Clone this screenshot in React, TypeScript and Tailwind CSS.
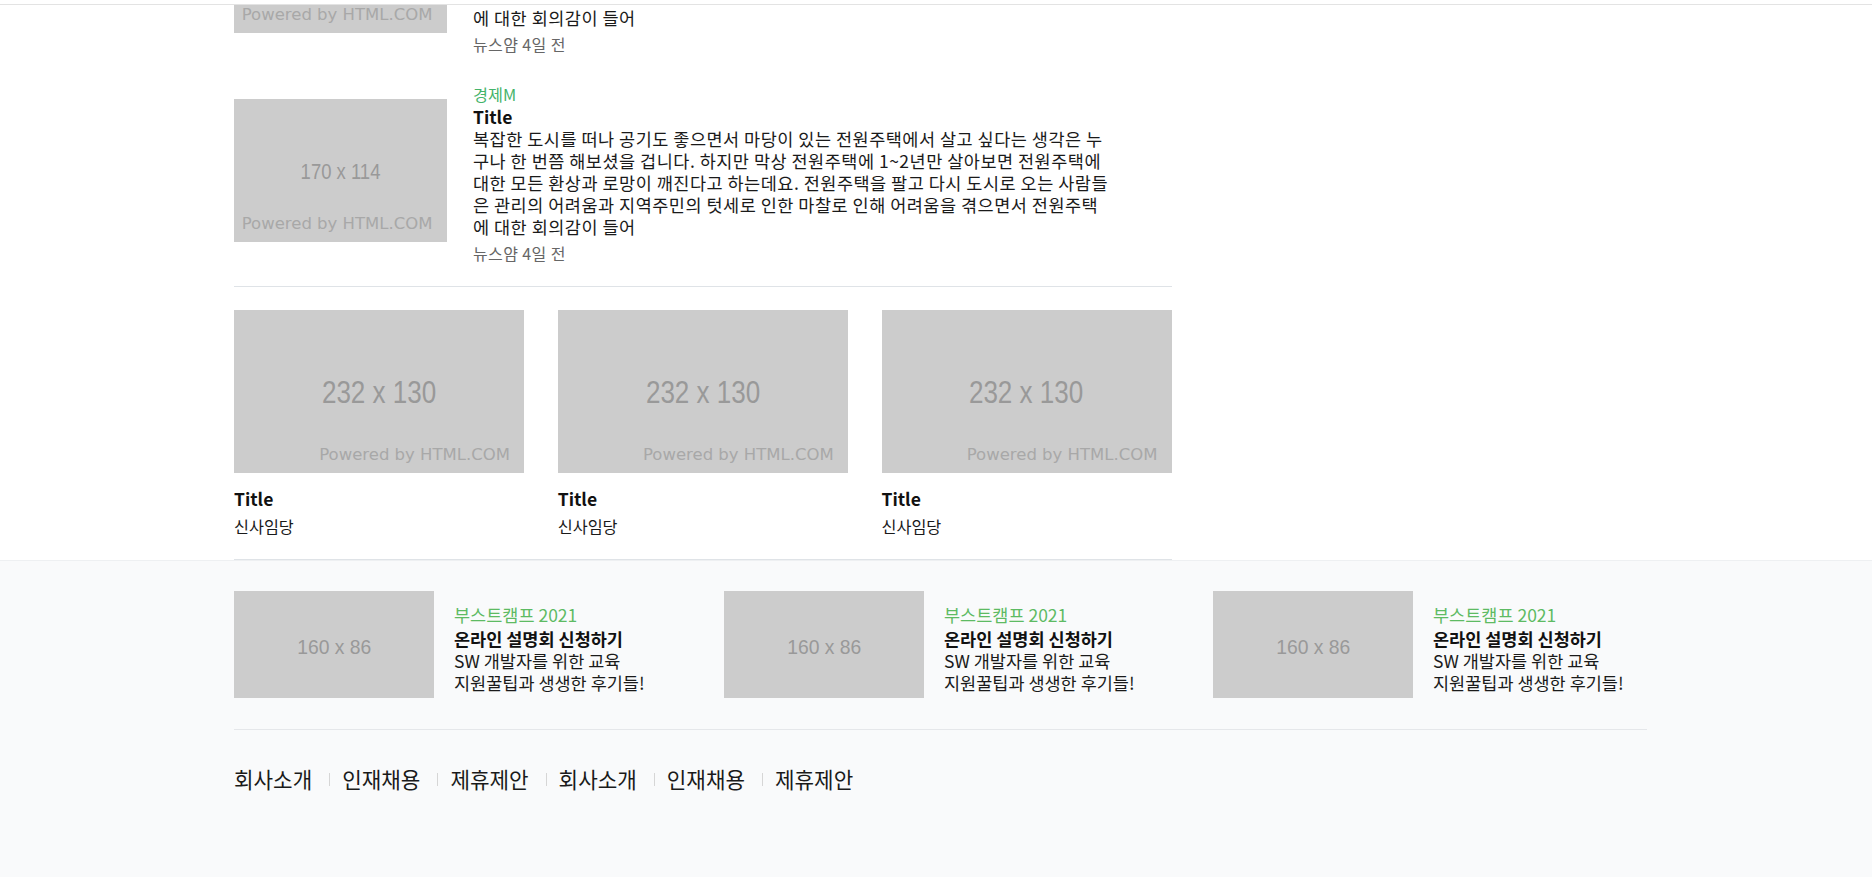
import React from "react";

const bodyLines = [
  "복잡한 도시를 떠나 공기도 좋으면서 마당이 있는 전원주택에서 살고 싶다는 생각은 누",
  "구나 한 번쯤 해보셨을 겁니다. 하지만 막상 전원주택에 1~2년만 살아보면 전원주택에",
  "대한 모든 환상과 로망이 깨진다고 하는데요. 전원주택을 팔고 다시 도시로 오는 사람들",
  "은 관리의 어려움과 지역주민의 텃세로 인한 마찰로 인해 어려움을 겪으면서 전원주택",
  "에 대한 회의감이 들어",
];

function NewsItem() {
  return (
    <div className="flex items-start">
      <div className="relative mt-[16px] flex h-[142.5px] w-[212.5px] shrink-0 items-center justify-center bg-[#cccccc] pt-[4px]">
        <span className="[font-family:'Liberation_Sans',Arial,sans-serif] text-[22px] leading-[24px] text-[#999999] scale-x-[0.84]">
          170 x 114
        </span>
        <span className="absolute bottom-[8px] right-[14px] whitespace-nowrap [font-family:'DejaVu_Sans',sans-serif] text-[16.5px] leading-[20px] text-[#a8a8a8]">
          Powered by HTML.COM
        </span>
      </div>
      <div className="ml-[26.5px] flex flex-col">
        <div className="text-[16.25px] leading-[22px] text-[#44b36a]">경제M</div>
        <div className="mt-px text-[17.5px] font-bold leading-[22px] text-[#111111]">Title</div>
        {bodyLines.map((l, i) => (
          <div key={i} className="whitespace-nowrap text-[17.5px] leading-[22px] tracking-[0.5px] text-[#1a1a1a]">
            {l}
          </div>
        ))}
        <div className="mt-[4px] text-[16px] leading-[22px] tracking-[0.4px] text-[#666666]">뉴스얌 4일 전</div>
      </div>
    </div>
  );
}

function Card() {
  return (
    <div className="flex flex-col">
      <div className="relative flex h-[162.5px] w-full items-center justify-center bg-[#cccccc] pt-[4px]">
        <span className="[font-family:'Liberation_Sans',Arial,sans-serif] text-[31px] leading-[34px] text-[#999999] scale-x-[0.84]">
          232 x 130
        </span>
        <span className="absolute bottom-[8px] right-[14px] whitespace-nowrap [font-family:'DejaVu_Sans',sans-serif] text-[16.5px] leading-[20px] text-[#a8a8a8]">
          Powered by HTML.COM
        </span>
      </div>
      <div className="mt-[15.5px] text-[17.5px] font-bold leading-[22px] text-[#111111]">Title</div>
      <div className="mt-[4.7px] text-[16.25px] leading-[22px] text-[#1a1a1a]">신사임당</div>
    </div>
  );
}

function Promo() {
  return (
    <div className="flex items-start">
      <div className="flex h-[107.5px] w-[200px] shrink-0 items-center justify-center bg-[#cccccc] pt-[4px]">
        <span className="[font-family:'Liberation_Sans',Arial,sans-serif] text-[21px] leading-[24px] text-[#999999] scale-x-[0.92]">
          160 x 86
        </span>
      </div>
      <div className="ml-[20px] mt-[13px] flex flex-col whitespace-nowrap">
        <div className="text-[17.5px] leading-[22px] text-[#5dbb63]">부스트캠프 2021</div>
        <div className="mt-[2.5px] text-[17.5px] font-bold leading-[22px] text-[#111111]">온라인 설명회 신청하기</div>
        <div className="text-[17.5px] leading-[22px] text-[#1a1a1a]">SW 개발자를 위한 교육</div>
        <div className="text-[17.5px] leading-[22px] text-[#1a1a1a]">지원꿀팁과 생생한 후기들!</div>
      </div>
    </div>
  );
}

const links = ["회사소개", "인재채용", "제휴제안", "회사소개", "인재채용", "제휴제안"];

export default function App() {
  return (
    <div className="flex min-h-[877px] flex-col overflow-hidden bg-white [font-family:'Noto_Sans_CJK_KR','Noto_Sans',sans-serif]">
      <div className="relative z-10 h-[5px] w-full shrink-0 border-b border-[#e3e3e3] bg-white" />
      <main className="-mt-[131px] ml-[234px] w-[937.5px]">
        <section className="flex flex-col gap-[28px] border-b border-[#dfe3e7] pb-[22px]">
          <NewsItem />
          <NewsItem />
        </section>
        <section className="grid grid-cols-3 gap-x-[33.75px] border-b border-[#dfe3e7] pb-[22.3px] pt-[23px]">
          <Card />
          <Card />
          <Card />
        </section>
      </main>
      <footer className="flex-1 border-t border-[#eef0f2] bg-[#f9fafb]">
        <div className="ml-[234px] w-[1413px]">
          <div className="grid grid-cols-[490px_489px_1fr] border-b border-[#e5e7ea] pb-[30.5px] pt-[30px]">
            <Promo />
            <Promo />
            <Promo />
          </div>
          <div className="flex items-center pt-[36px]">
            {links.map((l, i) => (
              <React.Fragment key={i}>
                <span className="text-[21.25px] leading-[26px] text-[#1a1a1a]">{l}</span>
                {i < links.length - 1 && (
                  <span className="ml-[17px] mr-[12px] mt-[2px] h-[13px] w-px bg-[#d6d6d6]" />
                )}
              </React.Fragment>
            ))}
          </div>
        </div>
      </footer>
    </div>
  );
}
